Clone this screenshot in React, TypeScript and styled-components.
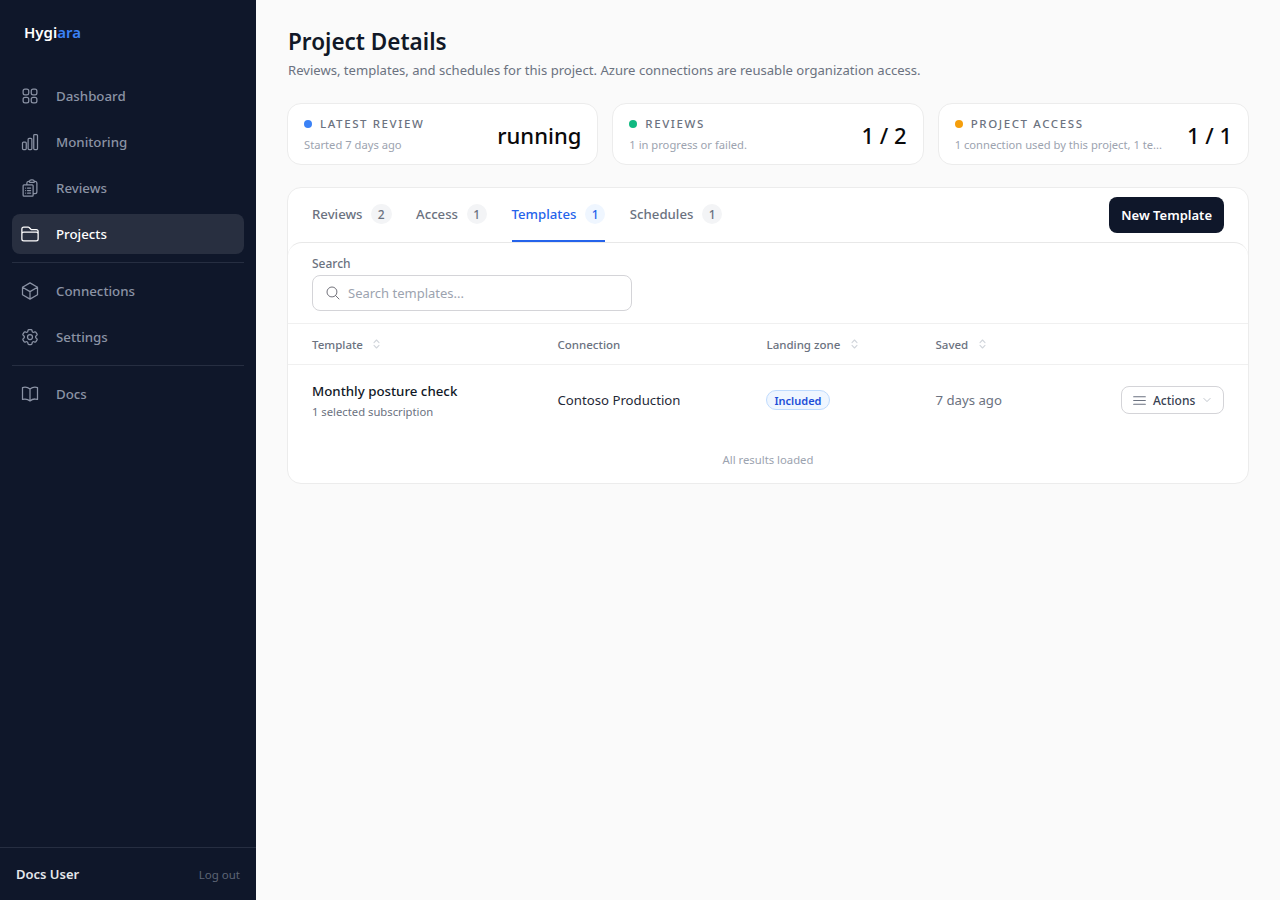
import { ReactNode } from "react";
import styled, { createGlobalStyle } from "styled-components";
import {
  HiOutlineBars3,
  HiOutlineBookOpen,
  HiOutlineChartBar,
  HiOutlineChevronDown,
  HiOutlineClipboardDocumentList,
  HiOutlineCog6Tooth,
  HiOutlineCube,
  HiOutlineFolder,
  HiOutlineMagnifyingGlass,
  HiOutlineSquares2X2,
} from "react-icons/hi2";

const GlobalStyle = createGlobalStyle`
  * { box-sizing: border-box; }
  html, body { margin: 0; padding: 0; height: 100%; }
  body {
    font-family: "Noto Sans", Inter, "Liberation Sans", sans-serif;
    background: #fafafa;
    color: #111827;
  }
`;

const Page = styled.div`
  display: flex;
  width: 1280px;
  height: 900px;
  overflow: hidden;
`;

const Sidebar = styled.aside`
  width: 256px;
  flex: none;
  background: #0f172a;
  display: flex;
  flex-direction: column;
`;

const Logo = styled.div`
  padding: 23px 24px 0;
  height: 68px;
  font-size: 15px;
  line-height: 18px;
  font-weight: 600;
  color: #ffffff;
  span {
    color: #3b82f6;
  }
`;

const Nav = styled.nav`
  flex: 1;
  padding: 8px 12px 0;
  display: flex;
  flex-direction: column;
  gap: 6px;
`;

const NavItem = styled.a<{ $active?: boolean }>`
  display: flex;
  align-items: center;
  gap: 16px;
  height: 40px;
  padding: 0 0 1px 8px;
  border-radius: 8px;
  font-size: 13.3px;
  font-weight: 500;
  color: ${(p) => (p.$active ? "#ffffff" : "#8b93a5")};
  background: ${(p) => (p.$active ? "#282f40" : "transparent")};
  svg {
    width: 20px;
    height: 20px;
    flex: none;
  }
`;

const NavDivider = styled.div`
  height: 1px;
  background: #262e41;
  margin: 2px 0;
`;

const SidebarFooter = styled.div`
  height: 53px;
  border-top: 1px solid #262e41;
  padding: 0 16px;
  display: flex;
  align-items: center;
  justify-content: space-between;
`;

const UserName = styled.div`
  font-size: 13px;
  font-weight: 600;
  color: #e5e7eb;
`;

const LogOut = styled.div`
  font-size: 11.5px;
  color: #5d6575;
`;

const Main = styled.main`
  flex: 1;
  min-width: 0;
  padding: 28px 31px 0;
`;

const Title = styled.h1`
  margin: 0;
  padding-left: 1px;
  font-size: 22.5px;
  line-height: 28px;
  font-weight: 600;
  color: #111827;
`;

const Subtitle = styled.p`
  margin: 6px 0 0;
  padding-left: 1px;
  font-size: 13.08px;
  line-height: 16px;
  color: #6b7280;
`;

const StatGrid = styled.div`
  display: grid;
  grid-template-columns: repeat(3, minmax(0, 1fr));
  gap: 14px;
  margin-top: 25px;
`;

const StatCard = styled.div`
  height: 62px;
  background: #ffffff;
  border: 1px solid #ececec;
  border-radius: 14px;
  padding: 0 16px;
  display: flex;
  align-items: center;
  justify-content: space-between;
  gap: 20px;
`;

const StatText = styled.div`
  min-width: 0;
  flex: 1;
`;

const StatLabel = styled.div`
  display: flex;
  align-items: center;
  gap: 8px;
  font-size: 11.5px;
  line-height: 16px;
  font-weight: 500;
  letter-spacing: 1.6px;
  color: #6b7280;
  text-transform: uppercase;
`;

const Dot = styled.span<{ $color: string }>`
  width: 8px;
  height: 8px;
  border-radius: 50%;
  background: ${(p) => p.$color};
`;

const StatHint = styled.div`
  margin-top: 5px;
  font-size: 11.2px;
  line-height: 15px;
  color: #9ca3af;
  white-space: nowrap;
  overflow: hidden;
  text-overflow: ellipsis;
`;

const StatValue = styled.div`
  font-size: 22px;
  line-height: 30px;
  font-weight: 500;
  color: #09090b;
  white-space: nowrap;
  margin-top: 2px;
`;

const Panel = styled.section`
  margin-top: 22px;
  background: #ffffff;
  border: 1px solid #ececec;
  border-radius: 14px;
  height: 297px;
`;

const TabBar = styled.div`
  display: flex;
  align-items: stretch;
  justify-content: space-between;
  height: 54px;
  padding: 0 24px;
`;

const Tabs = styled.div`
  display: flex;
  gap: 24.5px;
`;

const Tab = styled.div<{ $active?: boolean }>`
  display: flex;
  align-items: center;
  gap: 8.5px;
  height: 54px;
  font-size: 13.2px;
  font-weight: 500;
  color: ${(p) => (p.$active ? "#2563eb" : "#6b7280")};
  border-bottom: 2px solid ${(p) => (p.$active ? "#2563eb" : "transparent")};
`;

const Count = styled.span<{ $active?: boolean }>`
  min-width: 20.5px;
  height: 20px;
  padding: 0 6.5px;
  border-radius: 10px;
  display: flex;
  align-items: center;
  justify-content: center;
  font-size: 12px;
  font-weight: 500;
  color: ${(p) => (p.$active ? "#2563eb" : "#6b7280")};
  background: ${(p) => (p.$active ? "#eff6ff" : "#f3f4f6")};
`;

const PrimaryButton = styled.button`
  align-self: center;
  height: 36px;
  padding: 0 12px;
  border: none;
  border-radius: 8px;
  background: #0f172a;
  color: #ffffff;
  font: inherit;
  font-size: 13px;
  font-weight: 600;
`;

const SearchSection = styled.div`
  padding: 13px 24px 12px;
  border-top: 1px solid #e8e8e8;
  border-bottom: 1px solid #f0f0f0;
  border-radius: 14px 14px 0 0;
`;

const SearchLabel = styled.div`
  font-size: 12px;
  line-height: 16px;
  font-weight: 500;
  color: #6b7280;
  margin-bottom: 3px;
`;

const SearchBox = styled.div`
  width: 320px;
  height: 36px;
  display: flex;
  align-items: center;
  gap: 7px;
  padding: 0 12px;
  border: 1px solid #d4d4d8;
  border-radius: 8px;
  font-size: 13px;
  color: #9ca3af;
  svg {
    width: 16px;
    height: 16px;
    color: #71717a;
  }
`;

const Row = styled.div`
  display: grid;
  grid-template-columns: 245.5px 209px 169px 1fr auto;
  align-items: center;
  padding: 0 24px;
`;

const HeadRow = styled(Row)`
  height: 41px;
  border-bottom: 1px solid #f0f0f0;
`;

const HeadCell = styled.div`
  display: flex;
  align-items: center;
  gap: 10.5px;
  font-size: 11.5px;
  font-weight: 500;
  color: #6b7280;
  svg {
    color: #d1d5db;
  }
`;

const BodyRow = styled(Row)`
  height: 70px;
`;

const NameCell = styled.div`
  padding-top: 2px;
`;

const RowTitle = styled.div`
  font-size: 13.3px;
  line-height: 18px;
  font-weight: 500;
  color: #111827;
`;

const RowSub = styled.div`
  margin-top: 4px;
  font-size: 11.25px;
  line-height: 16px;
  color: #6b7280;
`;

const Cell = styled.div<{ $muted?: boolean }>`
  font-size: 13.2px;
  color: ${(p) => (p.$muted ? "#6b7280" : "#1f2937")};
`;

const Badge = styled.span`
  display: flex;
  align-items: center;
  width: fit-content;
  height: 20px;
  margin-left: -1px;
  padding: 0 8px;
  border-radius: 10px;
  border: 1px solid #bfdbfe;
  background: #eff6ff;
  color: #1d4ed8;
  font-size: 11px;
  font-weight: 600;
`;

const ActionsButton = styled.button`
  display: flex;
  align-items: center;
  height: 28px;
  width: 103px;
  padding: 0 0 0 9px;
  border: 1px solid #d4d4d8;
  border-radius: 8px;
  background: #ffffff;
  font: inherit;
  font-size: 12px;
  font-weight: 500;
  color: #374151;
  svg:first-child {
    width: 17px;
    height: 17px;
    margin-right: 5px;
    color: #6b7280;
  }
  svg:last-child {
    width: 10px;
    height: 10px;
    margin-left: 7px;
    color: #9ca3af;
  }
`;

const ResultsNote = styled.div`
  margin-top: 17px;
  text-align: center;
  font-size: 11.3px;
  line-height: 16px;
  color: #9ca3af;
`;

const SortIcon = () => (
  <svg width="7" height="10" viewBox="0 0 7 10" fill="none" stroke="currentColor" strokeWidth="1.1" strokeLinecap="round" strokeLinejoin="round">
    <path d="M1 3.6 3.5 1 6 3.6" />
    <path d="M1 6.4 3.5 9 6 6.4" />
  </svg>
);

const Head = ({ children }: { children: ReactNode }) => <HeadCell>{children}</HeadCell>;

const App = () => {
  return (
    <Page>
      <GlobalStyle />
      <Sidebar>
        <Logo>
          Hygi<span>ara</span>
        </Logo>
        <Nav>
          <NavItem>
            <HiOutlineSquares2X2 />
            Dashboard
          </NavItem>
          <NavItem>
            <HiOutlineChartBar />
            Monitoring
          </NavItem>
          <NavItem>
            <HiOutlineClipboardDocumentList />
            Reviews
          </NavItem>
          <NavItem $active>
            <HiOutlineFolder />
            Projects
          </NavItem>
          <NavDivider />
          <NavItem>
            <HiOutlineCube />
            Connections
          </NavItem>
          <NavItem>
            <HiOutlineCog6Tooth />
            Settings
          </NavItem>
          <NavDivider />
          <NavItem>
            <HiOutlineBookOpen />
            Docs
          </NavItem>
        </Nav>
        <SidebarFooter>
          <UserName>Docs User</UserName>
          <LogOut>Log out</LogOut>
        </SidebarFooter>
      </Sidebar>
      <Main>
        <Title>Project Details</Title>
        <Subtitle>
          Reviews, templates, and schedules for this project. Azure connections are reusable organization access.
        </Subtitle>
        <StatGrid>
          <StatCard>
            <StatText>
              <StatLabel>
                <Dot $color="#3b82f6" />
                Latest review
              </StatLabel>
              <StatHint>Started 7 days ago</StatHint>
            </StatText>
            <StatValue>running</StatValue>
          </StatCard>
          <StatCard>
            <StatText>
              <StatLabel>
                <Dot $color="#10b981" />
                Reviews
              </StatLabel>
              <StatHint>1 in progress or failed.</StatHint>
            </StatText>
            <StatValue>1 / 2</StatValue>
          </StatCard>
          <StatCard>
            <StatText>
              <StatLabel>
                <Dot $color="#f59e0b" />
                Project access
              </StatLabel>
              <StatHint>1 connection used by this project, 1 te...</StatHint>
            </StatText>
            <StatValue>1 / 1</StatValue>
          </StatCard>
        </StatGrid>
        <Panel>
          <TabBar>
            <Tabs>
              <Tab>
                Reviews <Count>2</Count>
              </Tab>
              <Tab>
                Access <Count>1</Count>
              </Tab>
              <Tab $active>
                Templates <Count $active>1</Count>
              </Tab>
              <Tab>
                Schedules <Count>1</Count>
              </Tab>
            </Tabs>
            <PrimaryButton>New Template</PrimaryButton>
          </TabBar>
          <SearchSection>
            <SearchLabel>Search</SearchLabel>
            <SearchBox>
              <HiOutlineMagnifyingGlass />
              Search templates...
            </SearchBox>
          </SearchSection>
          <HeadRow>
            <Head>
              Template <SortIcon />
            </Head>
            <Head>Connection</Head>
            <Head>
              Landing zone <SortIcon />
            </Head>
            <Head>
              Saved <SortIcon />
            </Head>
            <div />
          </HeadRow>
          <BodyRow>
            <NameCell>
              <RowTitle>Monthly posture check</RowTitle>
              <RowSub>1 selected subscription</RowSub>
            </NameCell>
            <Cell>Contoso Production</Cell>
            <div>
              <Badge>Included</Badge>
            </div>
            <Cell $muted>7 days ago</Cell>
            <ActionsButton>
              <HiOutlineBars3 />
              Actions
              <HiOutlineChevronDown />
            </ActionsButton>
          </BodyRow>
          <ResultsNote>All results loaded</ResultsNote>
        </Panel>
      </Main>
    </Page>
  );
};

export default App;
